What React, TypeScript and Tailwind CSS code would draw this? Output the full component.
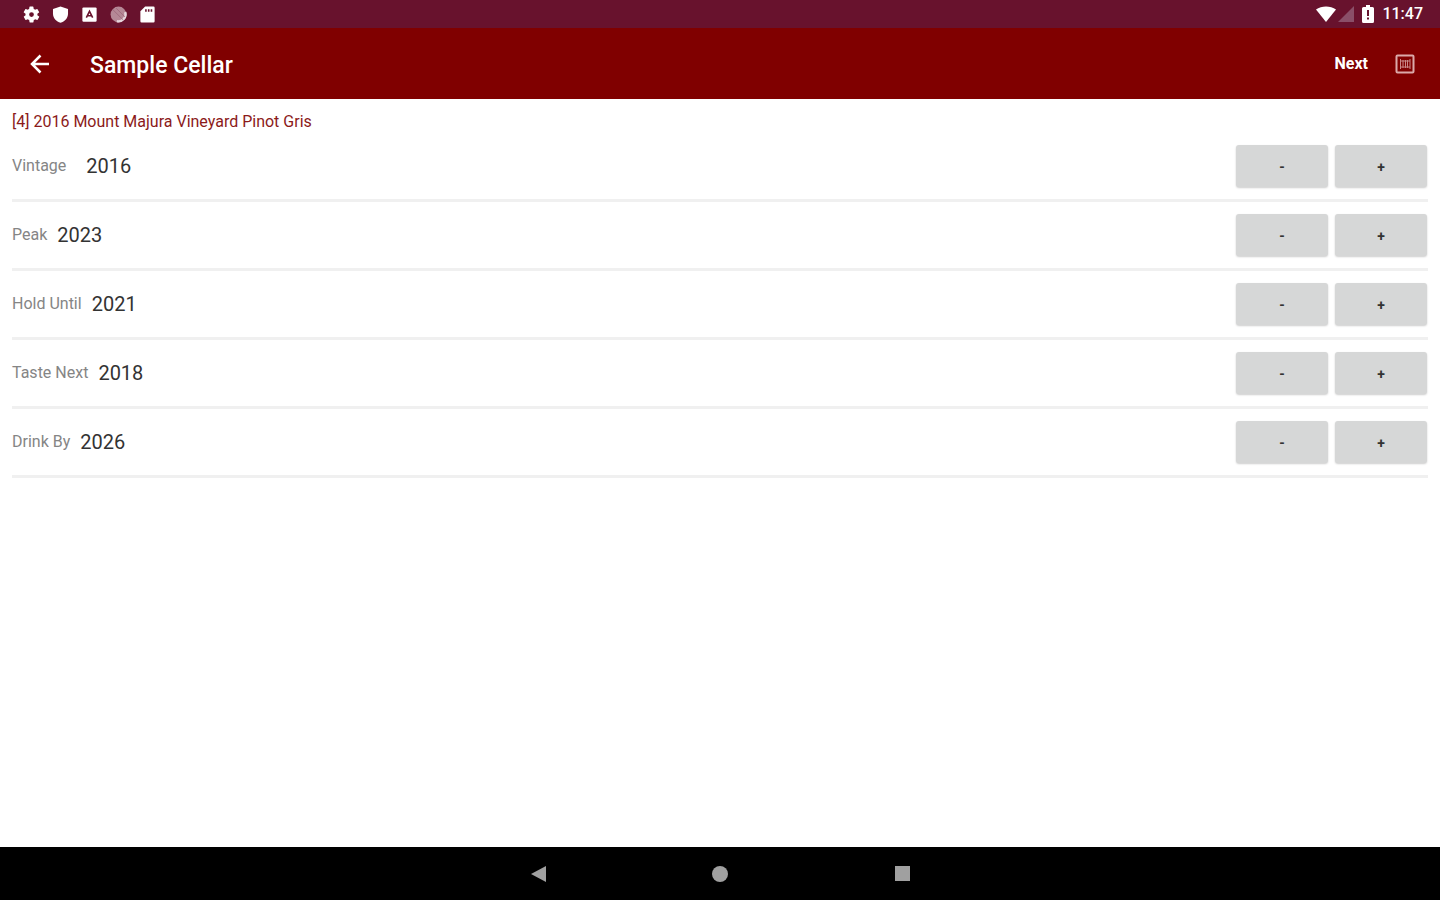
import { useState } from 'react';

const initialYears = [
  { id: 'vintage', label: 'Vintage', year: 2016, gap: 'gap-5' },
  { id: 'peak', label: 'Peak', year: 2023, gap: 'gap-[10px]' },
  { id: 'hold', label: 'Hold Until', year: 2021, gap: 'gap-[10px]' },
  { id: 'taste', label: 'Taste Next', year: 2018, gap: 'gap-[10px]' },
  { id: 'drink', label: 'Drink By', year: 2026, gap: 'gap-[10px]' },
];

function StatusBar() {
  return (
    <div className="flex h-7 items-center justify-between bg-[#68122d] px-[17px] text-white">
      <div className="flex items-center gap-[10px] pl-[5px]">
        <svg viewBox="0 0 24 24" className="h-[19px] w-[19px]" fill="currentColor">
          <path
            fillRule="evenodd"
            d="M19.4 13a7.8 7.8 0 0 0 0-2l2.1-1.6a.5.5 0 0 0 .1-.6l-2-3.5a.5.5 0 0 0-.6-.2l-2.5 1a7.3 7.3 0 0 0-1.7-1l-.4-2.6a.5.5 0 0 0-.5-.5h-4a.5.5 0 0 0-.5.5l-.4 2.6a7.6 7.6 0 0 0-1.7 1l-2.5-1a.5.5 0 0 0-.6.2l-2 3.5a.5.5 0 0 0 .1.6L4.5 11a7.9 7.9 0 0 0 0 2l-2.1 1.6a.5.5 0 0 0-.1.6l2 3.5c.1.2.4.3.6.2l2.5-1a7.3 7.3 0 0 0 1.7 1l.4 2.6c0 .3.2.5.5.5h4c.3 0 .5-.2.5-.5l.4-2.6a7.6 7.6 0 0 0 1.7-1l2.5 1c.2.1.5 0 .6-.2l2-3.5a.5.5 0 0 0-.1-.6zM12 15a3 3 0 1 1 0-6 3 3 0 0 1 0 6z"
          />
        </svg>
        <svg viewBox="0 0 24 24" className="h-[19px] w-[19px]" fill="currentColor">
          <path d="M12 2 2.5 5v6c0 5.500 4.200 10 9.500 11.500 5.300-1.500 9.500-6 9.500-11.500V5z" />
        </svg>
        <svg viewBox="0 0 24 24" className="h-[19px] w-[19px]">
          <rect x="3" y="3" width="18" height="18" rx="1.500" fill="currentColor" />
          <path d="m8 16 4-8 4 8M10 13.500h4" fill="none" stroke="#68122d" strokeWidth="2" />
        </svg>
        <svg viewBox="0 0 24 24" className="h-[19px] w-[19px]">
          <circle cx="12" cy="12" r="10" fill="#b58896" />
          <path d="M20.500 9A9 9 0 0 1 10 20.500" fill="none" stroke="#e6d6dc" strokeWidth="3" />
          <path d="m5 6 13 13M9 4l11 11" stroke="#9c6579" strokeWidth="1" />
        </svg>
        <svg viewBox="0 0 24 24" className="h-[19px] w-[19px]" fill="currentColor">
          <path
            fillRule="evenodd"
            d="M19.500 2H9L3 8v12.500A1.500 1.500 0 0 0 4.500 22h15a1.500 1.500 0 0 0 1.500-1.500v-17A1.500 1.500 0 0 0 19.500 2zM9 5.500h2v3H9zm3.500 0h2v3h-2zm3.500 0h2v3h-2z"
          />
        </svg>
      </div>
      <div className="flex items-center">
        <svg viewBox="0 0 20 16" className="h-4 w-5" fill="currentColor">
          <path d="M0 3.500C5.500-.6 14.500-.6 20 3.500L10 16z" />
        </svg>
        <svg viewBox="0 0 16 16" className="ml-0.5 h-4 w-4">
          <path d="M16 0v16H0z" fill="#8a4f68" />
        </svg>
        <svg viewBox="0 0 12 18" className="ml-2 h-[18px] w-3" fill="currentColor">
          <path
            fillRule="evenodd"
            d="M4 0h4v2h2.500A1.500 1.500 0 0 1 12 3.500v13a1.500 1.500 0 0 1-1.500 1.500h-9A1.500 1.500 0 0 1 0 16.500v-13A1.500 1.500 0 0 1 1.500 2H4zM5 5v6h2V5zm0 7.500v2h2v-2z"
          />
        </svg>
        <span className="ml-2 text-base leading-5 font-medium">11:47</span>
      </div>
    </div>
  );
}

function AppBar() {
  return (
    <header className="flex h-[71px] items-center bg-[#800000] pr-[25px] pl-7 text-white">
      <button type="button" aria-label="Back" className="mr-[38px]">
        <svg viewBox="0 0 24 24" className="h-6 w-6" fill="none" stroke="currentColor" strokeWidth="2.500">
          <path d="M21 12H5M12.500 3.500 4 12l8.500 8.500" />
        </svg>
      </button>
      <h1 className="pt-1 text-[23px] leading-8 font-medium">Sample Cellar</h1>
      <button type="button" className="mr-[27px] ml-auto text-base leading-6 font-bold">
        Next
      </button>
      <button type="button" aria-label="Barcode">
        <svg viewBox="0 0 20 20" className="h-5 w-5" fill="none" stroke="#dba9a9">
          <rect x="1.500" y="1.500" width="17" height="17" rx="1" strokeWidth="2" />
          <path d="M5.500 5v10M8 6v8M10.500 6v8M12.500 6v8M15 5v10M5 7h10M5 13h10" strokeWidth="1" stroke="#c98585" />
        </svg>
      </button>
    </header>
  );
}

function NavBar() {
  return (
    <nav className="flex h-[53px] items-center justify-center gap-[158px] bg-black text-[#a0a0a0]">
      <button type="button" aria-label="Back">
        <svg viewBox="0 0 24 24" className="h-6 w-6" fill="currentColor">
          <path d="M20 4v16L5 12z" />
        </svg>
      </button>
      <button type="button" aria-label="Home">
        <svg viewBox="0 0 24 24" className="h-6 w-6" fill="currentColor">
          <circle cx="12" cy="12" r="8" />
        </svg>
      </button>
      <button type="button" aria-label="Overview">
        <svg viewBox="0 0 24 24" className="h-6 w-6" fill="currentColor">
          <rect x="5" y="4" width="15" height="15" />
        </svg>
      </button>
    </nav>
  );
}

const stepButton =
  'h-[42px] w-[92px] rounded-[3px] bg-[#d6d7d7] pt-0.5 text-sm font-bold text-[#333333] shadow-[0_1px_2px_rgba(0,0,0,0.2)]';

export default function App() {
  const [rows, setRows] = useState(initialYears);

  const changeYear = (id: string, step: number) => {
    setRows(rows.map((row) => (row.id === id ? { ...row, year: row.year + step } : row)));
  };

  return (
    <div className="flex min-h-screen flex-col bg-white font-[Roboto,sans-serif]">
      <StatusBar />
      <AppBar />

      <main className="flex-1 px-3 pt-3">
        <h2 className="text-base leading-[22px] text-[#8b1a1a]">[4] 2016 Mount Majura Vineyard Pinot Gris</h2>

        {rows.map((row) => (
          <div key={row.id} className="flex items-center border-b-3 border-[#f0f0f0] pt-[11px] pb-3">
            <div className={`flex items-center ${row.gap}`}>
              <label htmlFor={row.id} className="text-base leading-6 text-[#858585]">
                {row.label}
              </label>
              <output id={row.id} className="text-[20px] leading-6 text-[#333333]">
                {row.year}
              </output>
            </div>
            <div className="ml-auto flex gap-[7px] pt-px pr-px">
              <button type="button" className={stepButton} onClick={() => changeYear(row.id, -1)}>
                -
              </button>
              <button type="button" className={stepButton} onClick={() => changeYear(row.id, 1)}>
                +
              </button>
            </div>
          </div>
        ))}
      </main>

      <NavBar />
    </div>
  );
}
